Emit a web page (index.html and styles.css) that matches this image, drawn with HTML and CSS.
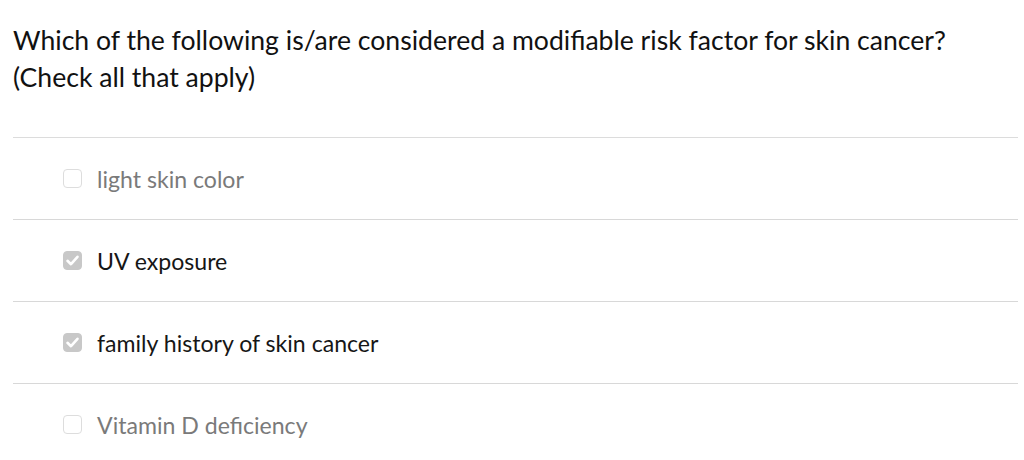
FILE: index.html
```html
<!DOCTYPE html>
<html lang="en">
<head>
<meta charset="utf-8">
<title>Question</title>
<link rel="stylesheet" href="styles.css">
</head>
<body>
<div class="quiz">
  <p class="question">Which of the following is/are considered a modifiable risk factor for skin cancer?<br>(Check all that apply)</p>
  <ul class="options">
    <li class="option">
      <span class="box"></span>
      <span class="label">light skin color</span>
    </li>
    <li class="option checked">
      <span class="box"><svg viewBox="0 0 19 19" width="19" height="19"><path d="M4.5 9.8 L8 13.2 L14.5 5.8" fill="none" stroke="#fff" stroke-width="2.6" stroke-linecap="round" stroke-linejoin="round"/></svg></span>
      <span class="label">UV exposure</span>
    </li>
    <li class="option checked">
      <span class="box"><svg viewBox="0 0 19 19" width="19" height="19"><path d="M4.5 9.8 L8 13.2 L14.5 5.8" fill="none" stroke="#fff" stroke-width="2.6" stroke-linecap="round" stroke-linejoin="round"/></svg></span>
      <span class="label">family history of skin cancer</span>
    </li>
    <li class="option">
      <span class="box"></span>
      <span class="label">Vitamin D deficiency</span>
    </li>
  </ul>
</div>
</body>
</html>
```
FILE: styles.css
```css
html, body {
  margin: 0;
  padding: 0;
  background: #ffffff;
}
body {
  font-family: Lato, "Open Sans", sans-serif;
  color: #1a1a1a;
}
.quiz {
  padding: 22px 6px 0 13px;
}
.question {
  margin: 0 0 41px 0;
  font-size: 26.6px;
  line-height: 37px;
  color: #111111;
}
.options {
  list-style: none;
  margin: 0;
  padding: 0;
  border-top: 1px solid #dcdcdc;
}
.option {
  display: flex;
  align-items: center;
  gap: 15px;
  height: 81px;
  padding-left: 50px;
  border-bottom: 1px solid #d8d8d8;
}
.option:last-child {
  border-bottom: none;
}
.box {
  width: 17px;
  height: 17px;
  border: 1px solid #dddddd;
  border-radius: 4px;
  background: #ffffff;
  display: flex;
  align-items: center;
  justify-content: center;
  flex: none;
}
.option.checked .box {
  background: #c8c8c8;
  border-color: #c8c8c8;
}
.box svg {
  display: block;
  flex: none;
}
.label {
  font-size: 23.1px;
  color: #7a7a7a;
}
.option.checked .label {
  color: #161616;
}
```
